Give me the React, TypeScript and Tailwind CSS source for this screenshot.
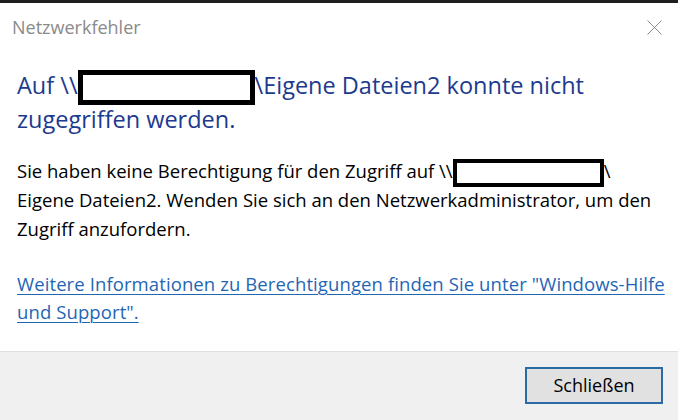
export default function App() {
  return (
    <div
      className="w-[678px] h-[420px] bg-white flex flex-col overflow-hidden"
      style={{ fontFamily: '"Open Sans", "Noto Sans", sans-serif' }}
    >
      {/* dark edge of window behind */}
      <div className="h-[3px] bg-[#1e1e1e]" />

      {/* title bar */}
      <div className="flex items-center justify-between pl-3 pr-[16px] h-[50px]">
        <span className="text-[18px] text-[#8a8a8a] -mt-[2px]">Netzwerkfehler</span>
        <svg width="15" height="15" viewBox="0 0 15 15" className="-mt-[2px]">
          <path d="M0.5 0.5 L14.5 14.5 M14.5 0.5 L0.5 14.5" stroke="#8c8c8c" strokeWidth="1" fill="none" />
        </svg>
      </div>

      {/* content */}
      <div className="flex-1 pl-[17px] pr-1 pt-[16px]">
        <h1 className="text-[23.5px] leading-[33px] text-[#1c3a8e] whitespace-nowrap">
          Auf \\
          <span className="inline-block align-middle w-[177px] h-[35px] border-[5px] border-black bg-white -my-[2px]" />
          \Eigene Dateien2 konnte nicht
          <br />
          zugegriffen werden.
        </h1>

        <p className="mt-[20px] text-[18.5px] leading-[29px] text-black whitespace-nowrap">
          Sie haben keine Berechtigung für den Zugriff auf \\
          <span className="inline-block align-middle w-[151px] h-[28px] border-[4px] border-black bg-white -my-[2px]" />
          \
          <br />
          Eigene Dateien2. Wenden Sie sich an den Netzwerkadministrator, um den
          <br />
          Zugriff anzufordern.
        </p>

        <p className="mt-[27px] text-[18.5px] leading-[28px] whitespace-nowrap">
          <a className="text-[#1f66b5] underline underline-offset-[3px] decoration-1 cursor-pointer tracking-[0.1px]">
            Weitere Informationen zu Berechtigungen finden Sie unter "Windows-Hilfe
            <br />
            und Support".
          </a>
        </p>
      </div>

      {/* footer */}
      <div className="h-[69px] bg-[#f0f0f0] border-t border-[#dfdfdf] flex items-start justify-end pr-[15px] pt-[15px]">
        <button className="w-[138px] h-[37px] bg-[#e1e1e1] border-2 border-[#2b6aa6] text-[18px] text-black">
          Schließen
        </button>
      </div>
    </div>
  );
}
